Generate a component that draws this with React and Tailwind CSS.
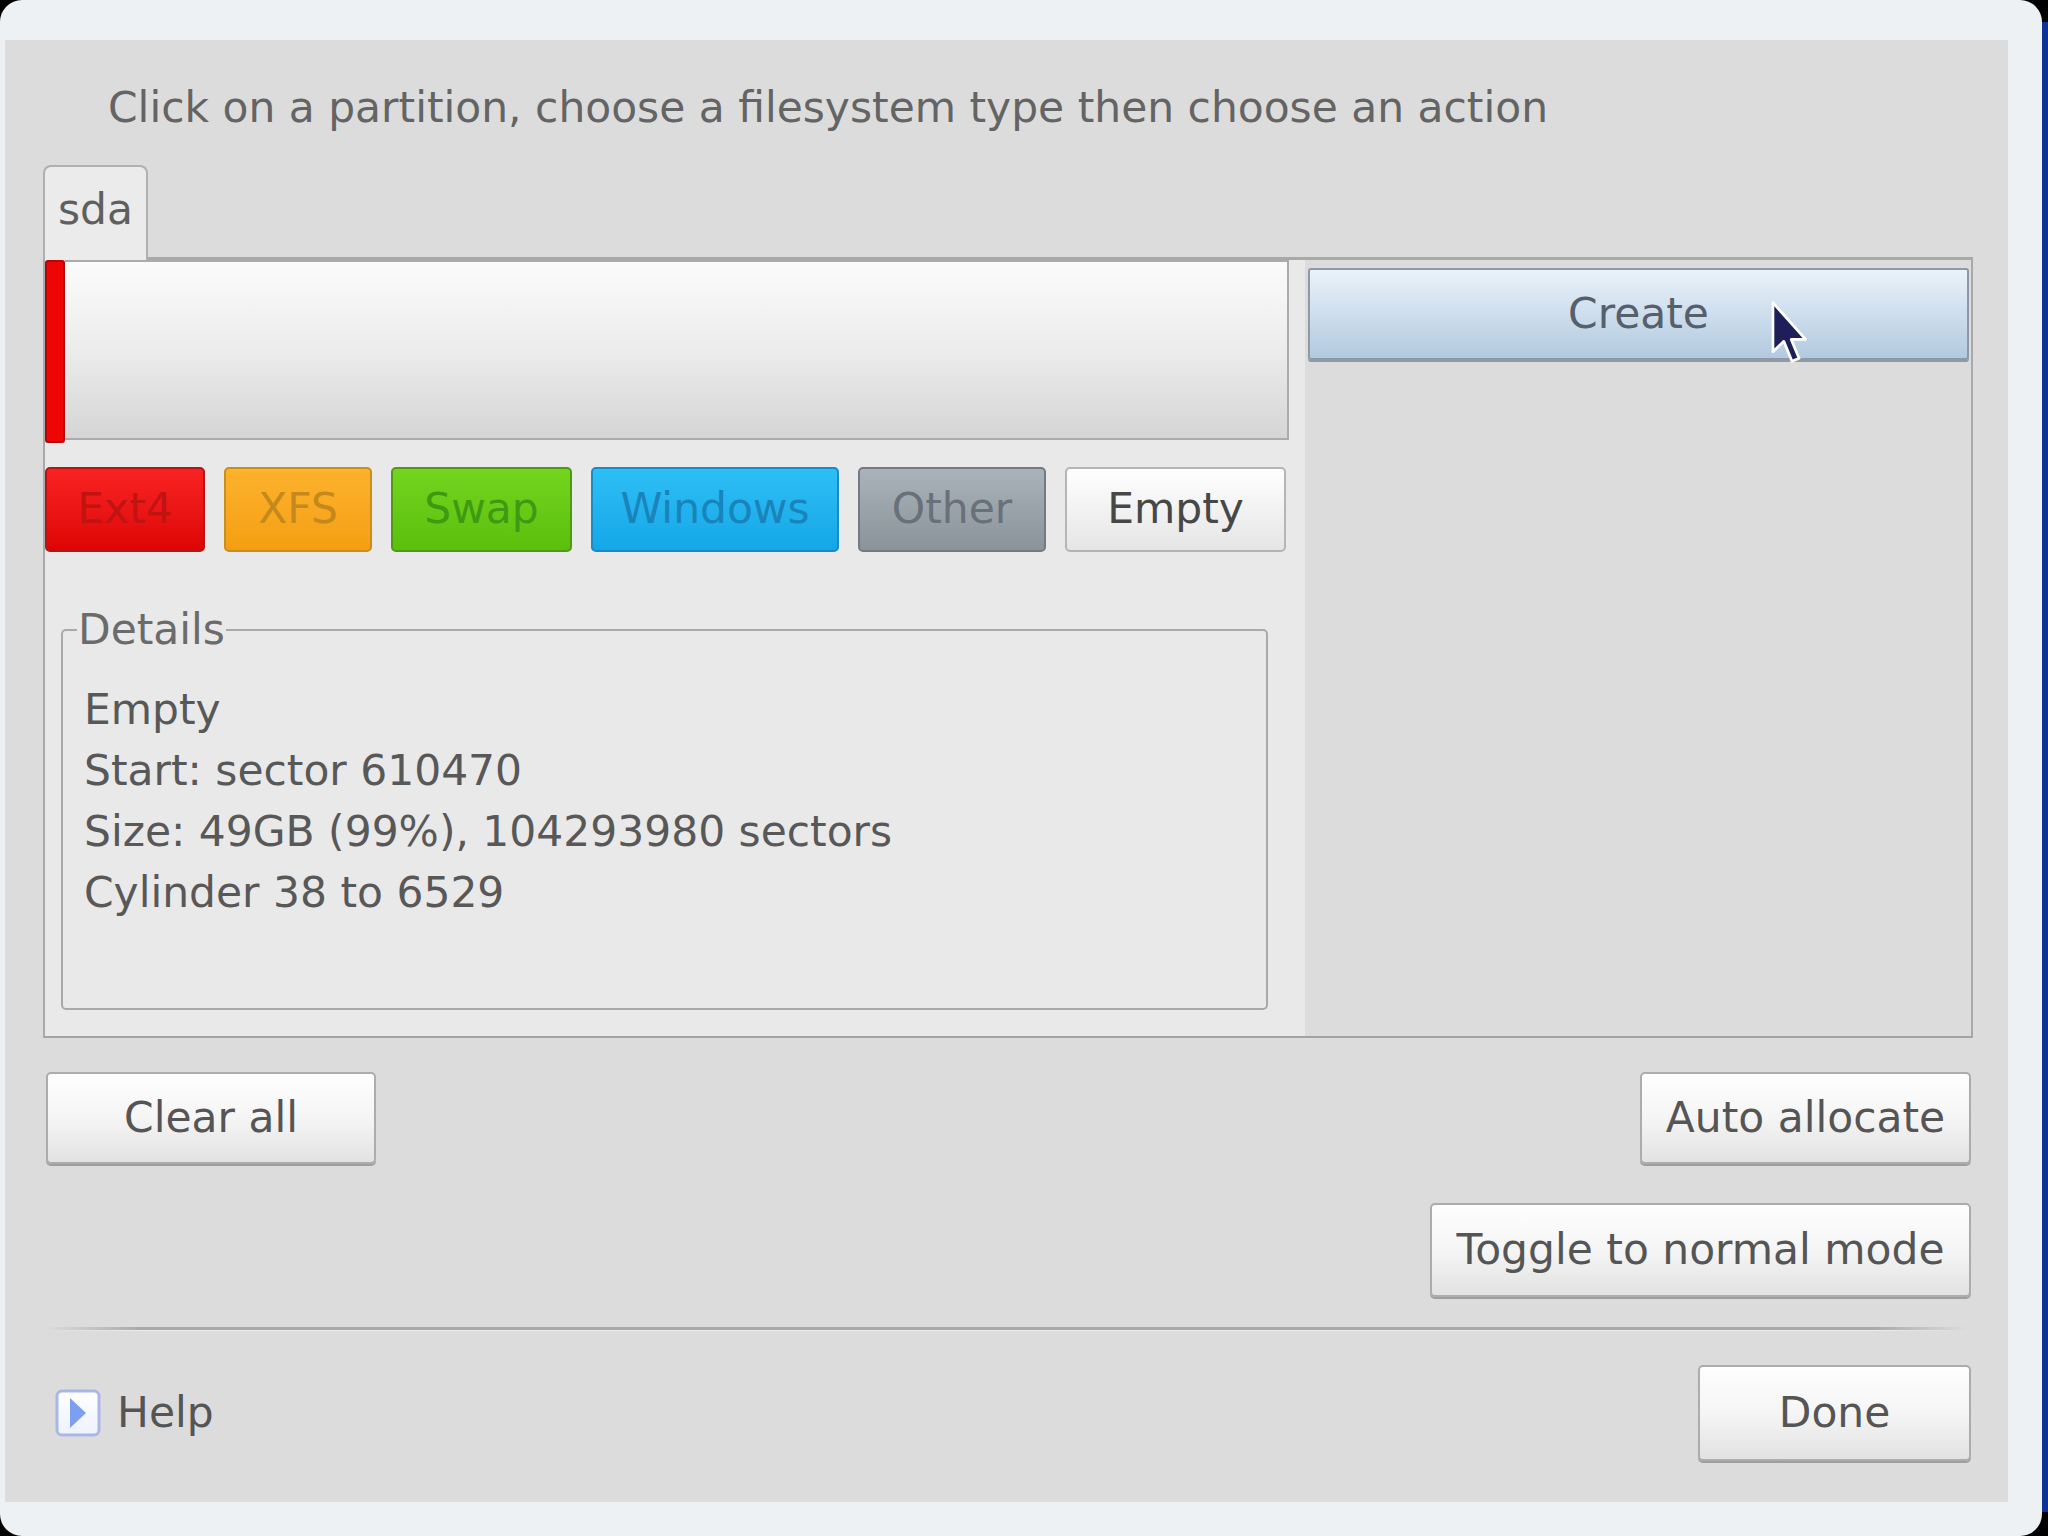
import React from "react";

const btn =
  "flex items-center justify-center rounded-[5px] border-2 border-[#acacac] bg-linear-to-b from-[#fefefe] via-[#f5f5f5] to-[#e2e2e2] shadow-[0_2px_0_#9e9e9e] text-[#555555] text-[42.4px] leading-none";

const types = [
  { label: "Ext4", cls: "w-[160px] border-[#b51515] from-[#f92222] to-[#dd0404] text-[#c21313]" },
  { label: "XFS", cls: "w-[148px] border-[#c98f1e] from-[#fdb22c] to-[#f49f10] text-[#c4881c]" },
  { label: "Swap", cls: "w-[181px] border-[#4f9a14] from-[#74d51e] to-[#5bbf0b] text-[#3e9a12]" },
  { label: "Windows", cls: "w-[248px] border-[#178cc4] from-[#2ebef6] to-[#13a7e7] text-[#1984b9]" },
  { label: "Other", cls: "w-[188px] border-[#737b82] from-[#abb3ba] to-[#8b939a] text-[#68707a]" },
  { label: "Empty", cls: "w-[221px] border-[#b5b5b5] from-[#ffffff] to-[#e5e5e5] text-[#474747]" },
];

function Cursor() {
  return (
    <svg
      className="absolute left-[1770px] top-[300px]"
      width="44"
      height="68"
      viewBox="0 0 16 25"
    >
      <path
        d="M1 1 L1 19 L5 15.2 L8 22.5 L10.6 21.4 L7.7 14.5 L13 14.5 Z"
        fill="#1d1f5a"
        stroke="#ffffff"
        strokeWidth="1"
        strokeLinejoin="round"
      />
    </svg>
  );
}

function HelpIcon() {
  return (
    <svg width="46" height="48" viewBox="0 0 46 48">
      <defs>
        <linearGradient id="hg" x1="0" y1="0" x2="0" y2="1">
          <stop offset="0" stopColor="#ffffff" />
          <stop offset="1" stopColor="#eef2ff" />
        </linearGradient>
      </defs>
      <rect x="2" y="2" width="42" height="44" rx="5" fill="url(#hg)" stroke="#a9b7e6" strokeWidth="3" />
      <polygon points="15,9 31,24 15,39" fill="#7c9ff2" />
    </svg>
  );
}

export default function App() {
  return (
    <div className="relative flex h-[1536px] w-[2048px] overflow-hidden bg-black font-['DejaVu_Sans',sans-serif]">
      <div className="flex h-full w-[2042px] rounded-[22px] bg-[#eef1f4] pb-[34px] pl-[5px] pr-[34px] pt-[40px]">
        <div className="flex flex-1 flex-col bg-[#dcdcdd]">
          {/* header */}
          <div className="mt-[43px] pl-[103px] text-[42.4px] leading-[50px] text-[#646464]">
            Click on a partition, choose a filesystem type then choose an action
          </div>

          {/* tab */}
          <div className="mt-[32px] flex pl-[38px]">
            <div className="relative z-10 -mb-[3px] flex h-[95px] w-[105px] items-center justify-center rounded-t-[8px] border-2 border-b-0 border-[#b0b0b0] bg-[#ebebeb] pb-[6px] text-[42.4px] leading-none text-[#5f5f5f]">
              sda
            </div>
          </div>

          {/* panel */}
          <div className="ml-[38px] mr-[35px] flex h-[781px] border-2 border-t-[3px] border-[#a9a9a9] border-b-[#a3a3a3]">
            <div className="flex w-[1260px] flex-col bg-[#e9e9e9]">
              {/* partition bar */}
              <div className="flex h-[180px] w-[1244px]">
                <div className="h-[183px] w-[20px] rounded-[3px] border-2 border-[#b00808] bg-[#ee0505]" />
                <div className="flex-1 border-2 border-l-0 border-[#ababab] bg-linear-to-b from-[#fbfbfb] via-[#ececec] to-[#d5d5d5]" />
              </div>

              {/* types */}
              <div className="mt-[27px] flex h-[85px] gap-[19px]">
                {types.map((t) => (
                  <div
                    key={t.label}
                    className={
                      "flex items-center justify-center rounded-[5px] border-2 bg-linear-to-b text-[42.4px] leading-none " +
                      t.cls
                    }
                  >
                    {t.label}
                  </div>
                ))}
              </div>

              {/* details */}
              <fieldset className="ml-[16px] mr-[37px] mt-[56px] h-[402px] rounded-[5px] border-2 border-[#a9a9a9]">
                <legend className="ml-[14px] px-[1px] text-[42.4px] leading-[44px] text-[#6b6b6b]">
                  Details
                </legend>
                <div className="pl-[21px] pt-[27px] text-[42.4px] leading-[61px] text-[#585858]">
                  <div>Empty</div>
                  <div>Start: sector 610470</div>
                  <div>Size: 49GB (99%), 104293980 sectors</div>
                  <div>Cylinder 38 to 6529</div>
                </div>
              </fieldset>
            </div>

            <div className="flex flex-1 flex-col bg-[#dcdcdc] pl-[3px] pr-[2px] pt-[8px]">
              <div className="flex h-[92px] items-center justify-center rounded-[3px] border-2 border-[#8c9aa8] bg-linear-to-b from-[#eaf2fa] to-[#b2cae0] text-[42.4px] leading-none text-[#55606b] shadow-[0_2px_0_#8f9aa5]">
                Create
              </div>
            </div>
          </div>

          {/* bottom buttons */}
          <div className="mt-[34px] flex justify-between pl-[41px] pr-[37px]">
            <div className={btn + " h-[92px] w-[330px]"}>Clear all</div>
            <div className={btn + " h-[92px] w-[331px]"}>Auto allocate</div>
          </div>
          <div className="mt-[39px] flex justify-end pr-[37px]">
            <div className={btn + " h-[94px] w-[541px]"}>Toggle to normal mode</div>
          </div>

          {/* separator */}
          <div className="ml-[41px] mr-[40px] mt-[30px] flex flex-col">
            <div className="h-[3px] bg-[linear-gradient(to_right,transparent,#a9a9a9_5%,#a9a9a9_95%,transparent)]" />
            <div className="h-[1px] bg-[linear-gradient(to_right,transparent,#ececec_5%,#ececec_95%,transparent)]" />
          </div>

          {/* help / done */}
          <div className="mt-[34px] flex items-center justify-between pl-[50px] pr-[37px]">
            <div className="flex items-center gap-[16px] text-[42.4px] leading-none text-[#555555]">
              <HelpIcon />
              <span>Help</span>
            </div>
            <div className={btn + " h-[96px] w-[273px]"}>Done</div>
          </div>
        </div>
      </div>
      <div className="mb-[24px] mt-[22px] flex-1 bg-[#0d3396]" />
      <Cursor />
    </div>
  );
}
